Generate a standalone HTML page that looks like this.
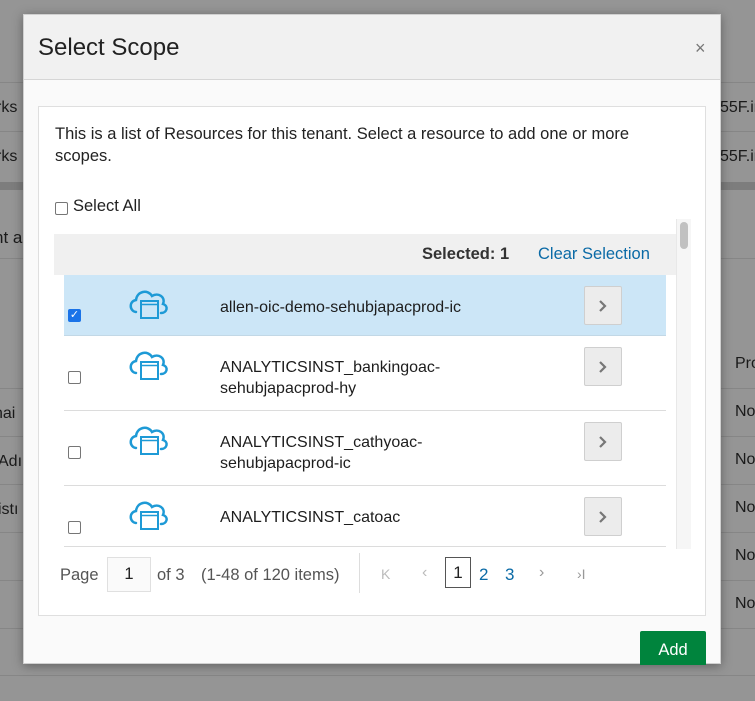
<!DOCTYPE html>
<html><head><style>
*{box-sizing:border-box;margin:0;padding:0}
body{width:755px;height:701px;overflow:hidden;background:#959595;font-family:"Liberation Sans",Arial,sans-serif;position:relative;color:#1d1d1d}
.a{position:absolute}
.bl{position:absolute;left:0;right:0;height:1px;background:#868686}
.bt{position:absolute;font-size:16px;color:#1a1a1a}
.modal{position:absolute;left:23px;top:14px;width:698px;height:650px;background:#fafafa;box-shadow:0 2px 10px rgba(0,0,0,.35);border:1px solid #d0d0d0}
.hdr{position:absolute;left:0;top:0;right:0;height:65px;background:#f1f1f1;border-bottom:1px solid #d6d6d6}
.panel{position:absolute;left:14px;top:91px;width:668px;height:510px;background:#fff;border:1px solid #dfdfdf}
.cb{position:absolute;width:13px;height:13px;border:1px solid #767676;border-radius:2px;background:#fff}
.row{position:absolute;left:40px;width:602px;border-bottom:1px solid #dcdcdc}
.nm{position:absolute;left:156px;font-size:16px;line-height:21px;color:#1d1d1d}
.btn{position:absolute;left:520px;width:38px;height:39px;background:#ececec;border:1px solid #cfcfcf;border-radius:2px}
.btn svg{position:absolute;left:13px;top:12px}
.ic{position:absolute;left:64px;width:42px;height:32px}
</style></head><body>
<div class="bl" style="top:82px"></div><div class="bl" style="top:131px"></div>
<div class="a" style="left:0;right:0;top:182px;height:8px;background:#7d7d7d"></div>
<div class="bl" style="top:258px"></div><div class="bl" style="top:388px"></div><div class="bl" style="top:436px"></div><div class="bl" style="top:484px"></div><div class="bl" style="top:532px"></div><div class="bl" style="top:580px"></div><div class="bl" style="top:628px"></div><div class="bl" style="top:675px"></div>
<div class="bt" style="left:-4px;top:99px">rks</div><div class="bt" style="left:-4px;top:148px">rks</div>
<div class="bt" style="left:-6px;top:228px;font-size:17px">nt a</div>
<div class="bt" style="left:-6px;top:405px">nai</div><div class="bt" style="left:-2px;top:453px">Adı</div><div class="bt" style="left:-2px;top:501px">istı</div>
<div class="bt" style="left:720px;top:99px">55F.ir</div><div class="bt" style="left:720px;top:148px">55F.ir</div>
<div class="bt" style="left:735px;top:355px">Pro</div><div class="bt" style="left:735px;top:403px">No</div><div class="bt" style="left:735px;top:451px">No</div><div class="bt" style="left:735px;top:499px">No</div><div class="bt" style="left:735px;top:547px">No</div><div class="bt" style="left:735px;top:595px">No</div>
<div class="modal">
 <div class="hdr"><div class="a" style="left:14px;top:19px;font-size:24px;color:#222">Select Scope</div><div class="a" style="left:671px;top:23px;font-size:18px;color:#777">×</div></div>
 <div class="panel">
  <div class="a" style="left:16px;top:16px;font-size:16.5px;line-height:22px;color:#222;width:610px">This is a list of Resources for this tenant. Select a resource to add one or more scopes.</div>
  <div class="cb" style="left:16px;top:95px"></div>
  <div class="a" style="left:34px;top:90px;font-size:16.5px;color:#222">Select All</div>
  <div class="a" style="left:15px;top:127px;width:622px;height:41px;background:#f0f0f0"></div>
  <div class="a" style="left:383px;top:138px;font-size:16.5px;font-weight:bold;color:#333">Selected: 1</div>
  <div class="a" style="left:499px;top:138px;font-size:16.5px;color:#0a6aa6">Clear Selection</div>
  <div class="a" style="left:637px;top:112px;width:15px;height:330px;background:#f6f6f6;border-left:1px solid #e8e8e8"></div>
  <div class="a" style="left:641px;top:115px;width:8px;height:27px;background:#c1c1c1;border-radius:4px"></div>
  <div class="a" style="left:15px;top:168px;width:622px;height:272px;overflow:hidden">
   <div class="row" style="left:10px;top:0;height:61px;background:#cce6f7;border-bottom:1px solid #c2d8e6">
    <div class="a" style="left:4px;top:34px;width:13px;height:13px;background:#1a73e8;border-radius:2px;color:#fff;font-size:11px;line-height:13px;text-align:center">✓</div>
    <svg class="ic" style="top:13px" viewBox="0 0 42 32"><path d="M8 24 C1 23 1 13 8 12 C9 3 20 1 24 8 C30 4 38 9 35 16 C41 18 39 25 33 25" fill="none" stroke="#1e9ad6" stroke-width="2.5" stroke-linecap="round"/><rect x="13" y="13" width="17" height="17" fill="#cce6f7" stroke="#1e9ad6" stroke-width="2"/><line x1="13" y1="16.5" x2="30" y2="16.5" stroke="#1e9ad6" stroke-width="1.5"/></svg>
    <div class="nm" style="top:22px">allen-oic-demo-sehubjapacprod-ic</div>
    <div class="btn" style="top:11px"><svg width="10" height="14" viewBox="0 0 10 14"><path d="M2 2 L7 7 L2 12" fill="none" stroke="#777" stroke-width="2.2"/></svg></div>
   </div>
   <div class="row" style="left:10px;top:61px;height:75px">
    <div class="cb" style="left:4px;top:35px"></div>
    <svg class="ic" style="top:13px" viewBox="0 0 42 32"><path d="M8 24 C1 23 1 13 8 12 C9 3 20 1 24 8 C30 4 38 9 35 16 C41 18 39 25 33 25" fill="none" stroke="#1e9ad6" stroke-width="2.5" stroke-linecap="round"/><rect x="13" y="13" width="17" height="17" fill="#fff" stroke="#1e9ad6" stroke-width="2"/><line x1="13" y1="16.5" x2="30" y2="16.5" stroke="#1e9ad6" stroke-width="1.5"/></svg>
    <div class="nm" style="top:21px">ANALYTICSINST_bankingoac-<br>sehubjapacprod-hy</div>
    <div class="btn" style="top:11px"><svg width="10" height="14" viewBox="0 0 10 14"><path d="M2 2 L7 7 L2 12" fill="none" stroke="#777" stroke-width="2.2"/></svg></div>
   </div>
   <div class="row" style="left:10px;top:136px;height:75px">
    <div class="cb" style="left:4px;top:35px"></div>
    <svg class="ic" style="top:13px" viewBox="0 0 42 32"><path d="M8 24 C1 23 1 13 8 12 C9 3 20 1 24 8 C30 4 38 9 35 16 C41 18 39 25 33 25" fill="none" stroke="#1e9ad6" stroke-width="2.5" stroke-linecap="round"/><rect x="13" y="13" width="17" height="17" fill="#fff" stroke="#1e9ad6" stroke-width="2"/><line x1="13" y1="16.5" x2="30" y2="16.5" stroke="#1e9ad6" stroke-width="1.5"/></svg>
    <div class="nm" style="top:21px">ANALYTICSINST_cathyoac-<br>sehubjapacprod-ic</div>
    <div class="btn" style="top:11px"><svg width="10" height="14" viewBox="0 0 10 14"><path d="M2 2 L7 7 L2 12" fill="none" stroke="#777" stroke-width="2.2"/></svg></div>
   </div>
   <div class="row" style="left:10px;top:211px;height:61px">
    <div class="cb" style="left:4px;top:35px"></div>
    <svg class="ic" style="top:13px" viewBox="0 0 42 32"><path d="M8 24 C1 23 1 13 8 12 C9 3 20 1 24 8 C30 4 38 9 35 16 C41 18 39 25 33 25" fill="none" stroke="#1e9ad6" stroke-width="2.5" stroke-linecap="round"/><rect x="13" y="13" width="17" height="17" fill="#fff" stroke="#1e9ad6" stroke-width="2"/><line x1="13" y1="16.5" x2="30" y2="16.5" stroke="#1e9ad6" stroke-width="1.5"/></svg>
    <div class="nm" style="top:21px">ANALYTICSINST_catoac</div>
    <div class="btn" style="top:11px"><svg width="10" height="14" viewBox="0 0 10 14"><path d="M2 2 L7 7 L2 12" fill="none" stroke="#777" stroke-width="2.2"/></svg></div>
   </div>
  </div>
  <div class="a" style="left:21px;top:459px;font-size:16.5px;color:#555">Page</div>
  <div class="a" style="left:68px;top:450px;width:44px;height:35px;border:1px solid #e0e0e0;background:#fafafa;font-size:16.5px;text-align:center;line-height:33px;color:#222">1</div>
  <div class="a" style="left:118px;top:459px;font-size:16.5px;color:#555">of 3</div>
  <div class="a" style="left:162px;top:459px;font-size:16.5px;color:#555">(1-48 of 120 items)</div>
  <div class="a" style="left:320px;top:446px;width:1px;height:40px;background:#ddd"></div>
  <div class="a" style="left:342px;top:459px;font-size:14px;color:#bbb">K</div>
  <div class="a" style="left:383px;top:457px;font-size:16px;color:#bbb">‹</div>
  <div class="a" style="left:406px;top:450px;width:26px;height:31px;border:1px solid #555;font-size:17px;text-align:center;line-height:29px;color:#222">1</div>
  <div class="a" style="left:440px;top:458px;font-size:17px;color:#0a6aa6">2</div>
  <div class="a" style="left:466px;top:458px;font-size:17px;color:#0a6aa6">3</div>
  <div class="a" style="left:500px;top:457px;font-size:16px;color:#999">›</div>
  <div class="a" style="left:538px;top:459px;font-size:14px;color:#999">›I</div>
 </div>
 <div class="a" style="left:616px;top:616px;width:66px;height:34px;background:#00843d;border-radius:2px 2px 0 0;color:#fff;font-size:16.5px;text-align:center;line-height:38px">Add</div>
</div>
</body></html>
